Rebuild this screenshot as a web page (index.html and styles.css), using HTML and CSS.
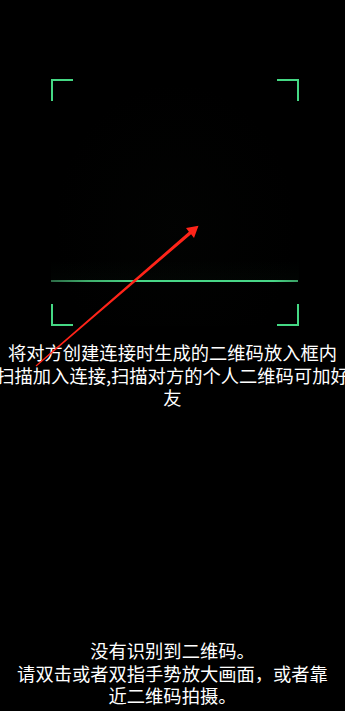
FILE: index.html
```html
<!DOCTYPE html>
<html lang="zh-CN">
<head>
<meta charset="utf-8">
<title>扫码</title>
<link rel="stylesheet" href="styles.css">
</head>
<body>
<div class="page">
  <div class="frame">
    <span class="corner tl"></span>
    <span class="corner tr"></span>
    <span class="corner bl"></span>
    <span class="corner br"></span>
    <div class="glow"></div>
    <div class="scanline"></div>
  </div>
  <div class="hint">
    <span class="line">将对方创建连接时生成的二维码放入框内</span>
    <span class="line">扫描加入连接,扫描对方的个人二维码可加好</span>
    <span class="line">友</span>
  </div>
  <div class="status">
    <span class="line">没有识别到二维码。</span>
    <span class="line">请双击或者双指手势放大画面，或者靠</span>
    <span class="line">近二维码拍摄。</span>
  </div>
  <svg class="arrow" width="345" height="711" viewBox="0 0 345 711" aria-hidden="true">
    <polygon fill="#ff2419" points="35.6,365.6 188.9,231.8 186,228 198.5,225.8 194,238 191.1,234.2 36.4,366.4"/>
  </svg>
</div>
</body>
</html>
```
FILE: styles.css
```css
html, body {
  margin: 0;
  padding: 0;
  background: #000;
}

.page {
  position: relative;
  width: 345px;
  height: 711px;
  overflow: hidden;
  display: flex;
  flex-direction: column;
  font-family: "Noto Sans CJK SC", "Noto Sans", sans-serif;
  color: #fff;
}

.frame {
  position: relative;
  margin: 79px 0 0 51px;
  width: 248px;
  height: 247px;
  padding-top: 181px;
  box-sizing: border-box;
  background: radial-gradient(ellipse at 50% 60%, rgba(30, 45, 30, 0.06), rgba(0, 0, 0, 0) 70%);
}

.corner {
  position: absolute;
  width: 22px;
  height: 22px;
  border: 0 solid #45d884;
  box-sizing: border-box;
}
.corner.tl { left: 0; top: 0; border-top-width: 2px; border-left-width: 2px; }
.corner.tr { right: 0; top: 0; border-top-width: 2px; border-right-width: 2px; }
.corner.bl { left: 0; bottom: 0; border-bottom-width: 2px; border-left-width: 2px; }
.corner.br { right: 0; bottom: 0; border-bottom-width: 2px; border-right-width: 2px; }

.glow {
  height: 20px;
  background: linear-gradient(to bottom, rgba(69, 216, 132, 0), rgba(69, 216, 132, 0.02));
}

.scanline {
  height: 2px;
  width: 247px;
  background: linear-gradient(to right, #2c6a46 0%, #3fae6c 15%, #48d687 35%, #48d687 90%, #3a9e64 100%);
}

.hint,
.status {
  display: flex;
  flex-direction: column;
  align-items: center;
  font-size: 18.3px;
  line-height: 22.5px;
}

.hint {
  margin-top: 15px;
}

.status {
  margin-top: auto;
  padding-bottom: 4.5px;
}

.line {
  display: block;
  white-space: nowrap;
}

.arrow {
  position: absolute;
  left: 0;
  top: 0;
  pointer-events: none;
}
```
